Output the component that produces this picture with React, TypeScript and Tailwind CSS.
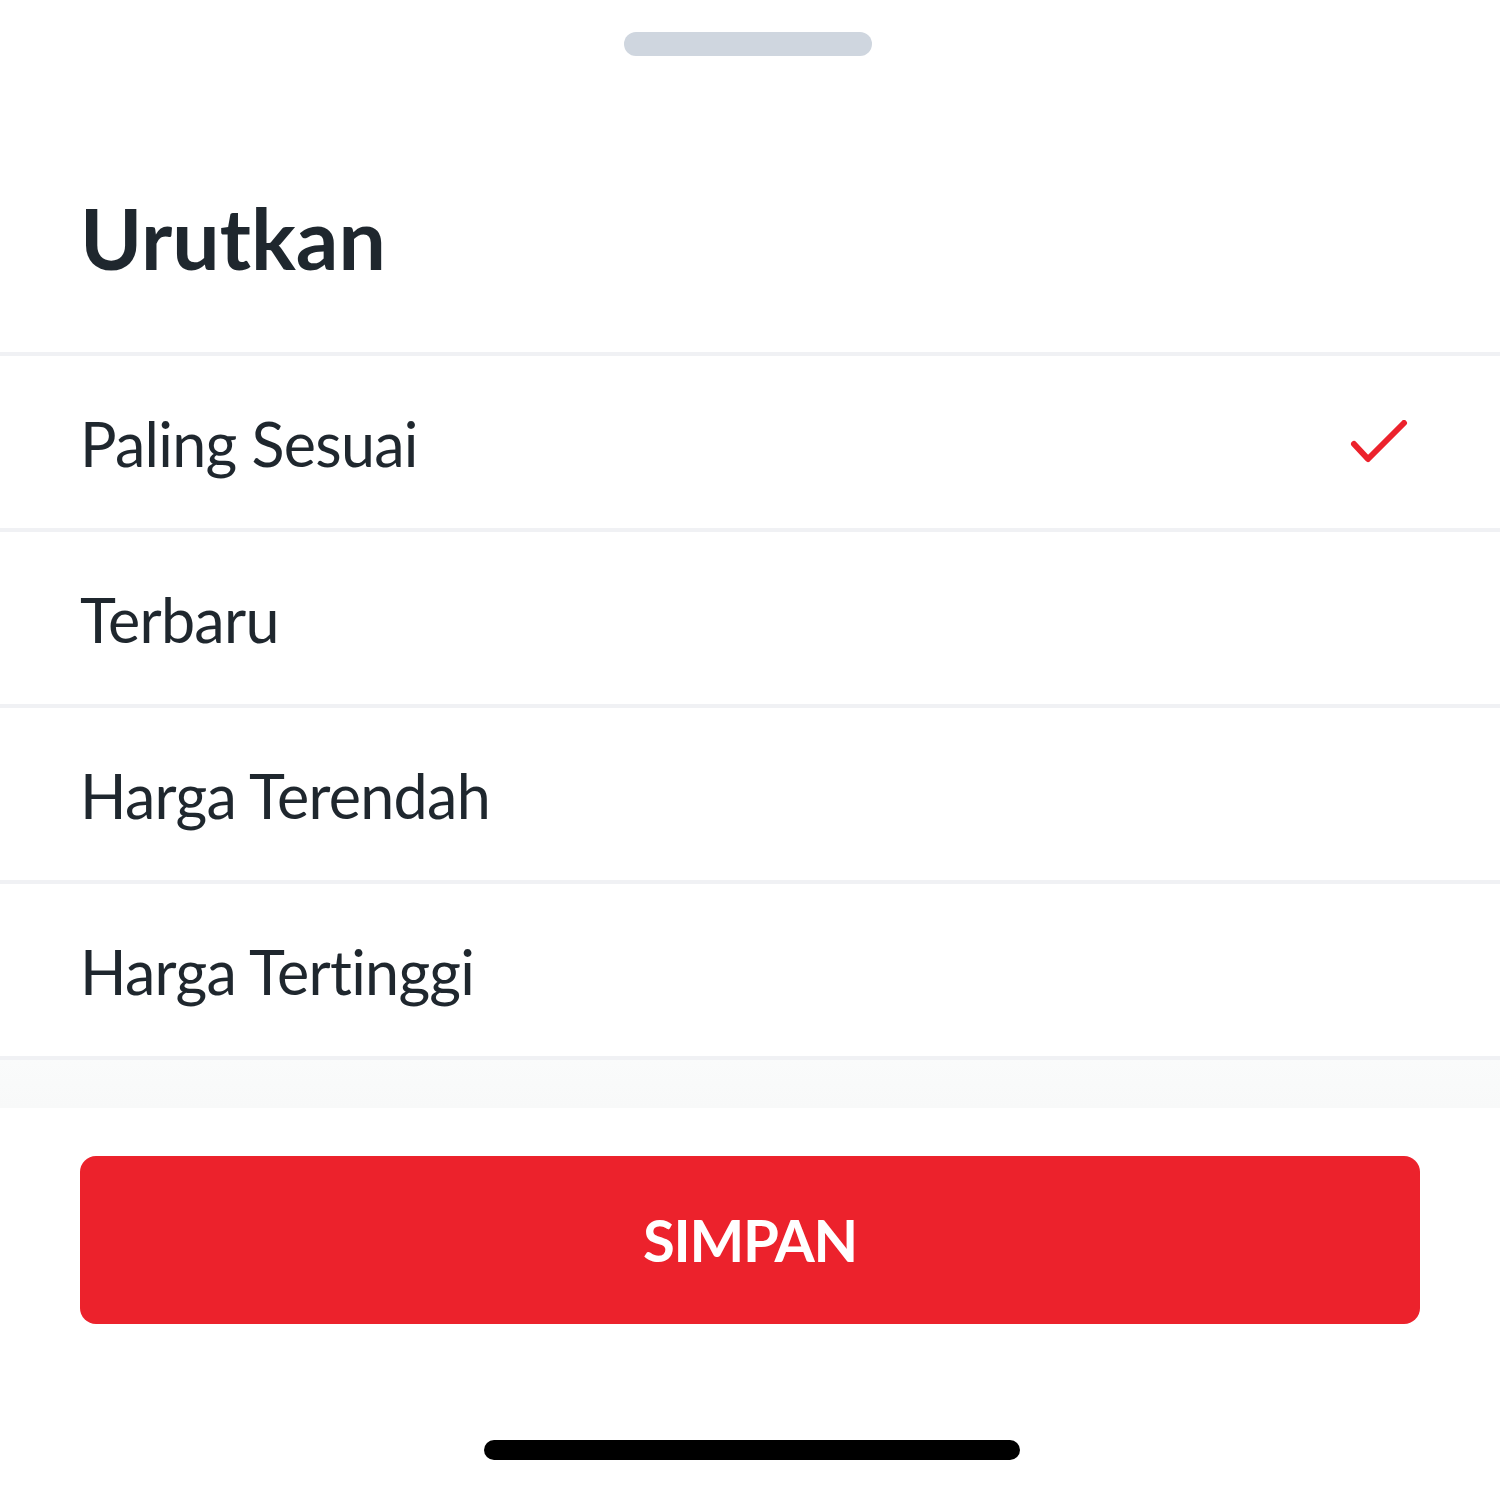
import React from "react";

const items = ["Paling Sesuai", "Terbaru", "Harga Terendah", "Harga Tertinggi"];

export default function App() {
  return (
    <div
      className="w-[1500px] h-[1492px] bg-white flex flex-col overflow-hidden [font-variant-ligatures:none]"
      style={{ fontFamily: "Lato, 'Noto Sans', sans-serif" }}
    >
      <div className="pt-[32px] pl-[624px] flex">
        <div className="w-[248px] h-[24px] rounded-full bg-[#cfd6df]" />
      </div>
      <div className="h-[296px] pl-[80px] pt-[140px]">
        <h1 className="text-[84px] leading-none font-bold text-[#1f272e]">
          Urutkan
        </h1>
      </div>
      <div className="flex flex-col">
        {items.map((t, i) => (
          <div key={t} className="flex flex-col">
            <div className="h-[4px] bg-[#f0f1f4]" />
            <div className="h-[172px] flex items-center justify-between pl-[80px] pr-[92px] pt-[2px]">
              <span className="text-[61px] leading-none font-normal text-[#1f272e] tracking-[-0.7px]">{t}</span>
              {i === 0 && (
                <svg width="58" height="46" viewBox="0 0 58 46" fill="none">
                  <polyline
                    points="4,24 18,39 54,3"
                    stroke="#ec222c"
                    strokeWidth="6"
                    strokeLinecap="round"
                    strokeLinejoin="round"
                  />
                </svg>
              )}
            </div>
          </div>
        ))}
        <div className="h-[4px] bg-[#f0f1f4]" />
        <div className="h-[48px] bg-gradient-to-b from-[#fafbfb] to-[#f8f9f9]" />
      </div>
      <div className="px-[80px] pt-[48px]">
        <button className="w-full h-[168px] rounded-[16px] bg-[#ec222c] flex items-center justify-center">
          <span className="text-[58px] leading-none font-bold text-white tracking-[-1.3px]">SIMPAN</span>
        </button>
      </div>
      <div className="pt-[116px] pl-[484px] flex">
        <div className="w-[536px] h-[20px] rounded-full bg-black" />
      </div>
    </div>
  );
}
